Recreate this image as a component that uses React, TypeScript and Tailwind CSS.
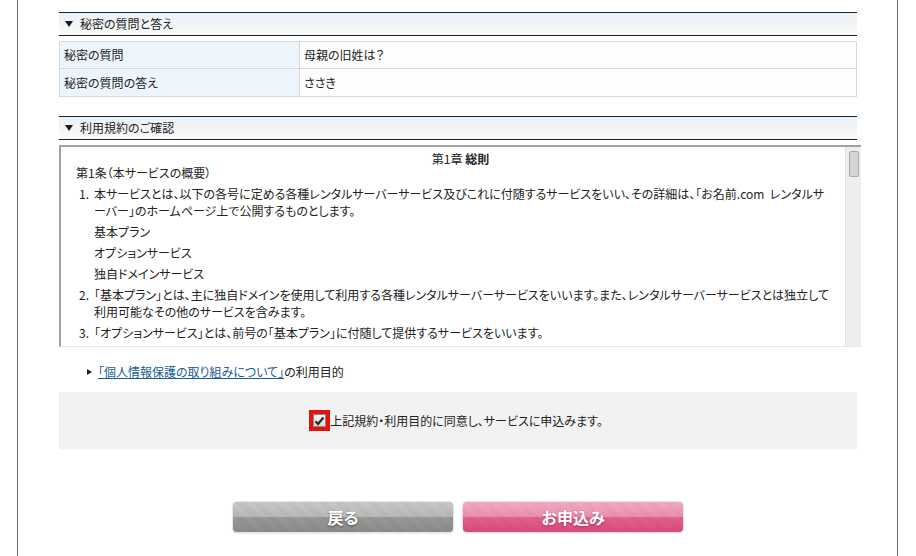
import React from "react";

function SectionHeader({ title }: { title: string }) {
  return (
    <div className="h-[24px] w-[798px] border-y border-[#17262e] bg-[linear-gradient(#eaf3fa,#f3f4f5_55%,#fafafa)] flex items-center pl-[6px]">
      <svg width="8" height="6" viewBox="0 0 8 6" className="mr-[7px]">
        <polygon points="0,0 8,0 4,6" fill="#1b1b1b" />
      </svg>
      <span className="text-[12px] leading-[14px] text-[#222]">{title}</span>
    </div>
  );
}

export default function App() {
  return (
    <div className="min-h-[556px] bg-white font-['Noto_Sans_CJK_JP','Noto_Sans',sans-serif] [font-feature-settings:'palt'] text-[#222]">
      <div className="ml-[17px] w-[881px] min-h-[556px] border-x border-[#6a6a6a] pl-[41px] pt-[12px]">
        <SectionHeader title="秘密の質問と答え" />
        <table className="mt-[5px] w-[798px] border-collapse text-[12px]">
          <tbody>
            <tr>
              <td className="h-[27px] w-[240px] border border-[#d9d9d9] bg-[#edf5fc] pl-[4px]">秘密の質問</td>
              <td className="h-[27px] border border-[#d9d9d9] bg-[#fdfdfd] pl-[4px]">母親の旧姓は？</td>
            </tr>
            <tr>
              <td className="h-[28px] w-[240px] border border-[#d9d9d9] bg-[#edf5fc] pl-[4px]">秘密の質問の答え</td>
              <td className="h-[28px] border border-[#d9d9d9] bg-[#fdfdfd] pl-[4px]">ささき</td>
            </tr>
          </tbody>
        </table>

        <div className="mt-[19px]">
          <SectionHeader title="利用規約のご確認" />
        </div>

        <div className="mt-[5px] flex h-[202px] w-[802px] border-t-2 border-l-2 border-b border-t-[#a2a2a2] border-l-[#a2a2a2] border-b-[#e6e6e6] bg-white">
          <div className="flex-1 overflow-hidden pl-[15px] pt-[5px] text-[12px] whitespace-nowrap">
            <div className="text-center leading-[14px]">
              第1章 <b className="font-bold">総則</b>
            </div>
            <div className="leading-[14px]">第1条（本サービスの概要）</div>
            <div className="mt-[5px] leading-[17px]">
              <div className="flex">
                <span className="w-[18px] pr-[5px] text-right">1.</span>
                <div>
                  本サービスとは、以下の各号に定める各種レンタルサーバーサービス及びこれに付随するサービスをいい、その詳細は、「お名前.com&nbsp;&nbsp;レンタルサ
                  <br />
                  ーバー」のホームページ上で公開するものとします。
                  <div className="mt-[4px]">基本プラン</div>
                  <div className="mt-[4px]">オプションサービス</div>
                  <div className="mt-[4px]">独自ドメインサービス</div>
                </div>
              </div>
              <div className="mt-[4px] flex">
                <span className="w-[18px] pr-[5px] text-right">2.</span>
                <div>
                  「基本プラン」とは、主に独自ドメインを使用して利用する各種レンタルサーバーサービスをいいます。また、レンタルサーバーサービスとは独立して
                  <br />
                  利用可能なその他のサービスを含みます。
                </div>
              </div>
              <div className="mt-[4px] flex">
                <span className="w-[18px] pr-[5px] text-right">3.</span>
                <div>「オプションサービス」とは、前号の「基本プラン」に付随して提供するサービスをいいます。</div>
              </div>
            </div>
          </div>
          <div className="w-[16px] border-l border-[#e2e2e2] bg-[#eeeeee] pt-[4px] flex justify-center">
            <div className="h-[26px] w-[10px] rounded-[2px] border border-[#a9a9a9] bg-[#d5d5d5]" />
          </div>
        </div>

        <div className="mt-[17px] flex items-center pl-[28px] text-[12px] leading-[16px]">
          <svg width="5" height="6" viewBox="0 0 5 6" className="mr-[6px]">
            <polygon points="0,0 5,3 0,6" fill="#222" />
          </svg>
          <a className="text-[#1b5b94] underline">「個人情報保護の取り組みについて」</a>
          <span>の利用目的</span>
        </div>

        <div className="mt-[12px] flex h-[57px] w-[798px] items-center justify-center bg-[#f2f2f2] text-[12px]">
          <div className="flex h-[21px] w-[21px] items-center justify-center bg-[#e3120b]">
            <div className="flex h-[13px] w-[13px] items-center justify-center border border-[#8a8a8a] bg-[linear-gradient(#f4f4f4,#d8d8d8)]">
              <svg width="11" height="10" viewBox="0 0 11 10">
                <path d="M1.5 5.2 L4 8 L9.5 1.5" stroke="#2a2a2a" strokeWidth="2.2" fill="none" />
              </svg>
            </div>
          </div>
          <span className="mr-[4px]">上記規約・利用目的に同意し、サービスに申込みます。</span>
        </div>

        <div className="mt-[53px] flex w-[798px] justify-center gap-[10px]">
          <button className="flex h-[30px] w-[220px] items-center justify-center rounded-[4px] shadow-[0_0_0_1px_#e6e6e6,0_1px_2px_#bbb] bg-[repeating-linear-gradient(45deg,rgba(0,0,0,0.07)_0_1px,transparent_1px_2px),linear-gradient(#cdcdcd,#bdbdbd_48%,#9c9c9c_52%,#8e8e8e)] text-[16px] font-bold text-white [text-shadow:0_1px_2px_rgba(0,0,0,0.45)]">
            戻る
          </button>
          <button className="flex h-[30px] w-[220px] items-center justify-center rounded-[4px] shadow-[0_0_0_1px_#f3dce4,0_1px_2px_#ccc] bg-[repeating-linear-gradient(45deg,rgba(0,0,0,0.06)_0_1px,transparent_1px_2px),linear-gradient(#f5afc6,#ef92b2_48%,#e4638f_52%,#de4c7e)] text-[16px] font-bold text-white [text-shadow:0_1px_2px_rgba(120,0,40,0.45)]">
            お申込み
          </button>
        </div>
      </div>
    </div>
  );
}
